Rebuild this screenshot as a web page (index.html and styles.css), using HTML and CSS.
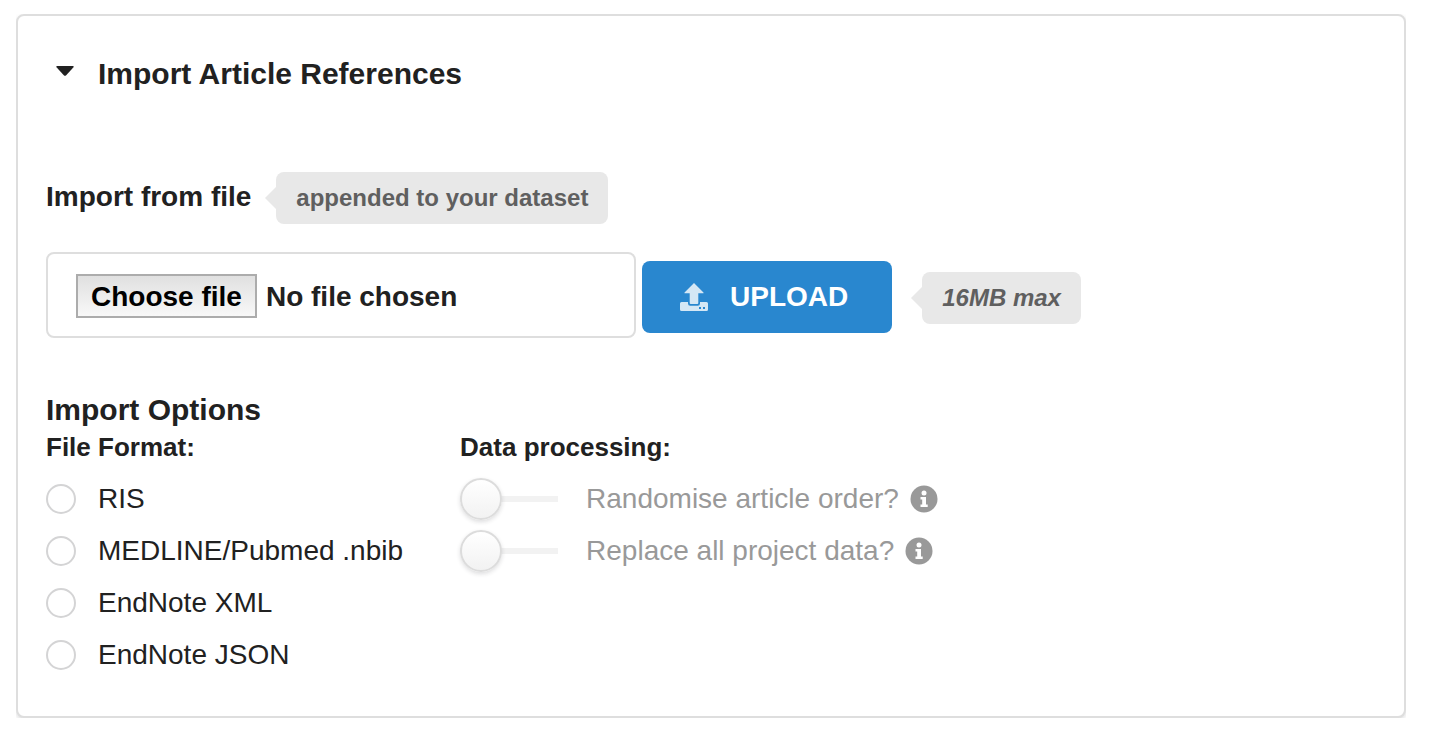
FILE: index.html
```html
<!DOCTYPE html>
<html lang="en-GB">
<head>
<meta charset="utf-8">
<meta name="viewport" content="width=device-width, initial-scale=1">
<title>Import Article References</title>
<link rel="stylesheet" href="styles.css">
</head>
<body>
<details class="segment" open>
  <summary class="title">
    <svg class="caret" viewBox="0 0 18 10" aria-hidden="true"><path d="M1.2 0h15.6q1.6.3.5 1.6L10.2 9.300q-1.200 1-2.400 0L.700 1.600Q-.4.300 1.200 0z"/></svg>
    <span>Import Article References</span>
  </summary>
  <form class="form">
    <div class="file-heading">
      <label class="file-title" for="file">Import from file</label>
      <span class="pointing">appended to your dataset</span>
    </div>
    <div class="upload-row">
      <div class="file-field">
        <input class="file-input" type="file" id="file">
        <label class="choose" for="file">Choose file</label>
        <span>No file chosen</span>
      </div>
      <button class="upload" type="button">
        <svg class="upload-icon" viewBox="0 0 28 28" aria-hidden="true"><path fill-rule="evenodd" d="M14 0L23.500 9.500v.800h-5.200V20q0 1-1 1h-6.600q-1 0-1-1V10.300H4.500V9.500zM1.500 19H8v1.500q0 2.200 2.200 2.200h7.600q2.200 0 2.200-2.200V19h6.500q1.500 0 1.500 1.500v6q0 1.500-1.500 1.500h-25Q0 28 0 26.500v-6Q0 19 1.500 19zM19 24v2h2v-2zm4 0v2h2v-2z"/></svg>
        <span class="upload-text">UPLOAD</span>
      </button>
      <span class="pointing limit">16MB max</span>
    </div>
    <h2 class="options-title">Import Options</h2>
    <div class="options">
      <fieldset class="group">
        <legend class="legend">File Format:</legend>
        <label class="option"><input class="radio" type="radio" name="format">RIS</label>
        <label class="option"><input class="radio" type="radio" name="format">MEDLINE/Pubmed .nbib</label>
        <label class="option"><input class="radio" type="radio" name="format">EndNote XML</label>
        <label class="option"><input class="radio" type="radio" name="format">EndNote JSON</label>
      </fieldset>
      <fieldset class="group">
        <legend class="legend">Data processing:</legend>
        <label class="option muted"><input class="toggle" type="checkbox"><span>Randomise article order?</span>
          <svg class="info" viewBox="0 0 28 28" aria-hidden="true"><circle cx="14" cy="14" r="13.500"/><circle class="mark" cx="14" cy="8" r="2.500"/><path class="mark" d="M10.500 12h5.500v7.500h1.700v2.500h-7.200v-2.500h1.700v-5h-1.700z"/></svg></label>
        <label class="option muted"><input class="toggle" type="checkbox"><span>Replace all project data?</span>
          <svg class="info" viewBox="0 0 28 28" aria-hidden="true"><circle cx="14" cy="14" r="13.500"/><circle class="mark" cx="14" cy="8" r="2.500"/><path class="mark" d="M10.500 12h5.500v7.500h1.700v2.500h-7.200v-2.500h1.700v-5h-1.700z"/></svg></label>
      </fieldset>
    </div>
  </form>
</details>
</body>
</html>
```

FILE: styles.css
```css
* {
  box-sizing: border-box;
}

body {
  margin: 14px 24px 20px 16px;
  background: #fff;
  color: #212121;
  font: 28px/36px "Liberation Sans", Arial, sans-serif;
}

.segment {
  padding: 40px 28px 35px;
  border: 2px solid #dedede;
  border-radius: 8px;
  background: #fff;
  box-shadow: 0 2px 4px rgba(34, 36, 38, 0.15);
}

.title {
  display: flex;
  gap: 24px;
  padding-left: 10px;
  font-size: 30px;
  font-weight: bold;
  list-style: none;
  cursor: pointer;
}

.caret {
  width: 18px;
  height: 10px;
  margin-top: 10px;
  fill: #212121;
}

.form {
  padding-top: 80px;
}

.file-heading {
  display: flex;
  align-items: baseline;
  gap: 25px;
  font-weight: bold;
}

.pointing {
  position: relative;
  padding: 8px 20px;
  border-radius: 8px;
  background: #e8e8e8;
  color: #5f5f5f;
  font-size: 24px;
  font-weight: bold;
}

.pointing::before {
  content: "";
  position: absolute;
  top: 15px;
  left: -11px;
  border: solid transparent;
  border-width: 11px 11px 11px 0;
  border-right-color: #e8e8e8;
}

.upload-row {
  display: flex;
  align-items: baseline;
  gap: 6px;
  margin-top: 28px;
}

.file-field {
  display: flex;
  align-items: baseline;
  gap: 9px;
  position: relative;
  flex: 0 1 590px;
  padding: 20px 28px 18px;
  border: 2px solid #dedede;
  border-radius: 8px;
  font-weight: bold;
}

.file-input {
  position: absolute;
  inset: 0;
  width: 100%;
  opacity: 0;
}

.choose {
  padding: 2px 13px 0;
  border: 2px solid #acacac;
  background: linear-gradient(#e0e0e0, #f8f8f8);
  color: #000;
  line-height: 38px;
}

.upload {
  display: flex;
  align-items: center;
  gap: 22px;
  padding: 18px 44px 18px 38px;
  border: 0;
  border-radius: 8px;
  background: #2987cf;
  color: #fff;
  font: bold 28px/36px "Liberation Sans", Arial, sans-serif;
}

.upload-icon {
  width: 28px;
  height: 28px;
  fill: #d4e7f5;
}

.upload-text {
  align-self: baseline;
}

.limit {
  margin-left: 24px;
  font-style: italic;
}

.options-title {
  margin: 53px 0 0;
  font-size: 30px;
  line-height: 38px;
}

.options {
  display: flex;
  gap: 57px;
}

.group {
  min-width: 0;
  margin: 0;
  padding: 0;
  border: 0;
}

.legend {
  margin-bottom: 8px;
  padding: 0;
  font-size: 26px;
  font-weight: bold;
}

.option {
  display: flex;
  align-items: center;
  line-height: 52px;
}

.radio {
  appearance: none;
  width: 30px;
  height: 30px;
  margin: 0 22px 0 0;
  border: 2px solid #d4d4d5;
  border-radius: 50%;
  background: #fff;
}

.radio:checked {
  box-shadow: inset 0 0 0 6px #fff;
  background: #212121;
}

.muted {
  color: #999;
}

.toggle {
  appearance: none;
  display: flex;
  align-items: center;
  width: 98px;
  height: 42px;
  margin: 0 28px 0 0;
  background: linear-gradient(#f2f2f2, #f2f2f2) center / 100% 6px no-repeat;
}

.toggle::before {
  content: "";
  box-sizing: border-box;
  width: 42px;
  height: 42px;
  border: 2px solid #dcdcdc;
  border-radius: 50%;
  background: linear-gradient(#fff, #f2f2f2);
  box-shadow: 0 2px 4px rgba(34, 36, 38, 0.15);
}

.toggle:checked {
  justify-content: flex-end;
}

.info {
  width: 28px;
  height: 28px;
  margin-left: 11px;
  fill: #999;
}

.mark {
  fill: #fff;
}
```
